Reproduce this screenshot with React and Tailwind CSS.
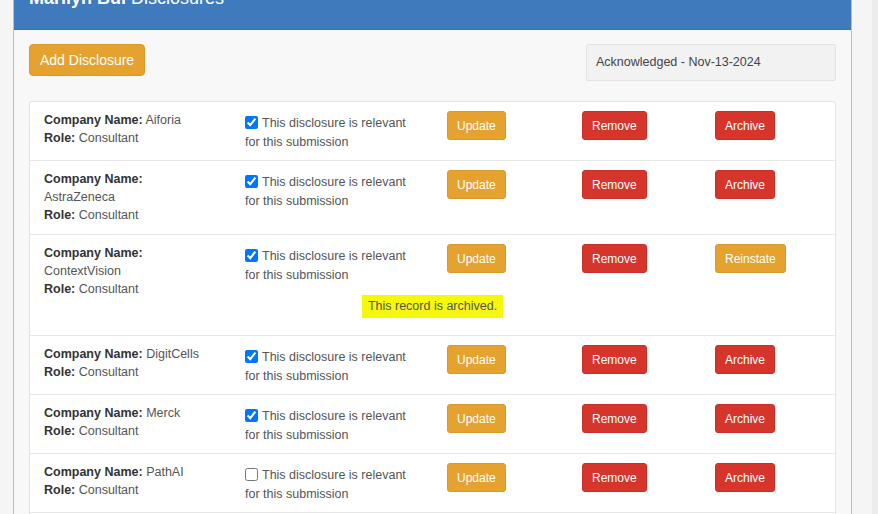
import React from "react";

const rows = [
  { name: "Aiforia", checked: true, wrap: false },
  { name: "AstraZeneca", checked: true, wrap: true },
  { name: "ContextVision", checked: true, wrap: true, archived: true },
  { name: "DigitCells", checked: true, wrap: false },
  { name: "Merck", checked: true, wrap: false },
  { name: "PathAI", checked: false, wrap: false },
  { name: "Proscia", checked: true, wrap: false },
];

function Btn({ color, children }) {
  const cls =
    color === "red"
      ? "bg-[#d6352c] border-[#c72f27]"
      : "bg-[#e5a22f] border-[#d99a2c]";
  return (
    <button
      className={`${cls} h-[29px] px-[9px] rounded-[3px] border text-white text-[12px] leading-none`}
    >
      {children}
    </button>
  );
}

function Row({ r }) {
  return (
    <div className="border-b border-[#e8e8e8] pt-[9px] pb-[10px] pl-[14px]">
      <div className="grid grid-cols-[201px_202px_135px_133px_1fr] items-start">
        <div className="text-[12.5px] leading-[18px] text-[#555] pr-2">
          {r.wrap ? (
            <>
              <div>
                <b className="text-[#333]">Company Name:</b>
              </div>
              <div>{r.name}</div>
            </>
          ) : (
            <div>
              <b className="text-[#333]">Company Name:</b> {r.name}
            </div>
          )}
          <div>
            <b className="text-[#333]">Role:</b> Consultant
          </div>
        </div>
        <label className="block text-[12.5px] leading-[19px] text-[#555] mt-[3px] -mb-[2px] max-w-[168px]">
          <input
            type="checkbox"
            defaultChecked={r.checked}
            className="w-[13px] h-[13px] m-0 mr-[4px] align-[-2px]"
          />
          This disclosure is relevant for this submission
        </label>
        <div>
          <Btn>Update</Btn>
        </div>
        <div>
          <Btn color="red">Remove</Btn>
        </div>
        <div>
          {r.archived ? <Btn>Reinstate</Btn> : <Btn color="red">Archive</Btn>}
        </div>
      </div>
      {r.archived && (
        <div className="flex justify-center -mt-[3px] mb-[7px] pr-[14px]">
          <span className="bg-[#f5f70c] text-[#555] text-[12.5px] leading-[23px] px-[6px]">
            This record is archived.
          </span>
        </div>
      )}
    </div>
  );
}

export default function App() {
  return (
    <div
      className="h-[514px] w-[878px] overflow-hidden flex bg-[#f5f5f6]"
      style={{ fontFamily: '"Liberation Sans", Arial, sans-serif' }}
    >
      <div className="w-[13px] shrink-0" />
      <div className="w-[839px] shrink-0 border-x border-[#a9c1df] bg-[#f8f8f8] flex flex-col">
        <div className="h-[30px] shrink-0 bg-[#3f7abd] border-b border-[#3a72b2] overflow-hidden pl-[15px]">
          <div className="-mt-[11px] text-[18px] leading-[18px] text-white">
            <b>Marilyn Bui</b> Disclosures
          </div>
        </div>
        <div className="px-[15px] pt-[14px]">
          <div className="flex justify-between items-start">
            <button className="h-[32px] px-[10px] rounded-[4px] bg-[#e5a22f] border border-[#d99a2c] text-white text-[14px]">
              Add Disclosure
            </button>
            <div className="w-[250px] h-[37px] bg-[#f2f2f2] border border-[#e2e2e2] rounded-[2px] flex items-center pl-[9px] text-[12.5px] text-[#444]">
              Acknowledged - Nov-13-2024
            </div>
          </div>
          <div className="mt-[20px] bg-white border border-[#e3e3e3] rounded-[3px]">
            {rows.map((r) => (
              <Row key={r.name} r={r} />
            ))}
          </div>
        </div>
      </div>
      <div className="flex-1 flex justify-end">
        <div className="w-[6px] bg-[#ececed]" />
      </div>
    </div>
  );
}
